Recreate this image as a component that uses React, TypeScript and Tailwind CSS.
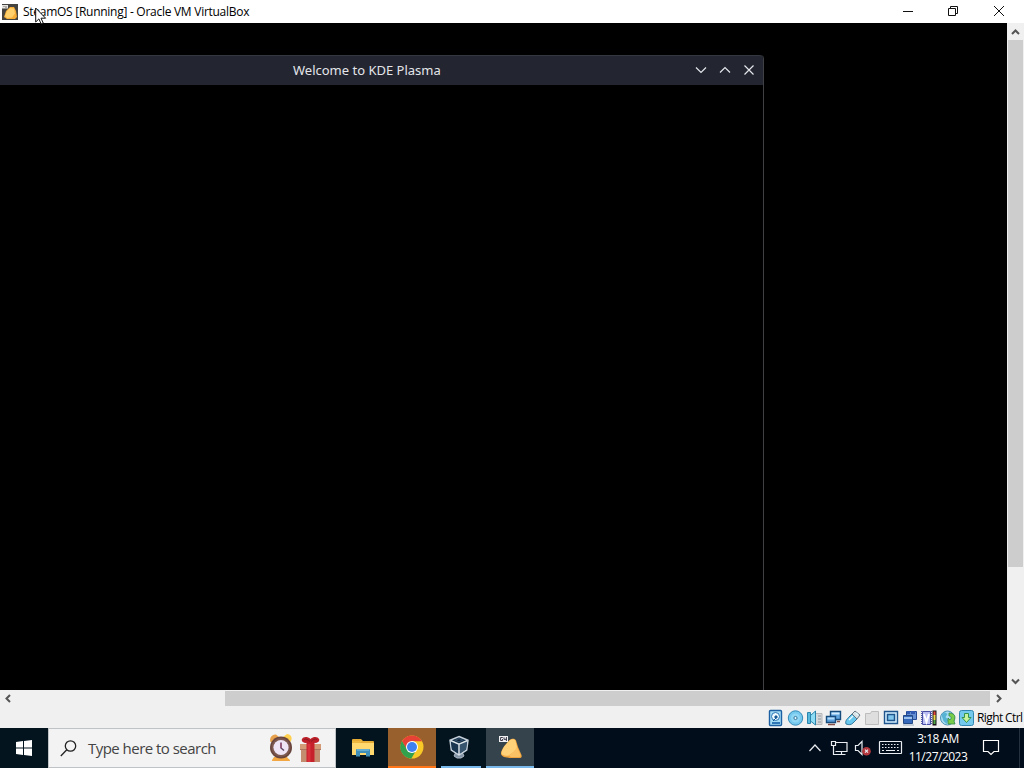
import React from 'react';

type IconProps = { className?: string };

const GuestIcon: React.FC<IconProps> = ({ className }) => (
  <svg className={className} viewBox="0 0 16 16">
    <path d="M0 0h16v16H0z" fill="#45433f" />
    <path d="M2 13 4 7l4-4h4l2 4 1 6-2 2H5z" fill="#f5ad38" />
    <path d="m3 12 2-5 3-3 4 .5 1 5-3 4-5 .5z" fill="#ffd06b" />
    <path d="M0 1h6v3.500H0z" fill="#e8e6e2" />
    <path d="M1.500 2.500h1M4 2v2" stroke="#77716b" fill="none" />
  </svg>
);

const PotatoIcon: React.FC = () => (
  <svg className="h-6 w-6" viewBox="0 0 24 24">
    <path d="M3 18.500c0-2 1-4 3-7l5-6c2-2 6-2.500 7 0l2 6.500 3.500 8c.5 2 0 3-2 3H12c-4-.500-9-1-9-4.500z" fill="#f0a53f" />
    <path d="M3.500 18c0-2 1.500-4 3-7l5-5.500c2-1.500 5-2 6 .5l1.500 6c-1 4-5 6-8 8.500-3 .5-7.500 0-7.500-2.500z" fill="#ffd27a" />
    <path d="m19 12 3.500 8c.3 2-1 2-2.500 2h-7l-2-1.500c3-2.500 7-4.500 8-8.500z" fill="#fbc265" />
    <path d="M1 1h9v6H1z" fill="#f1f1f4" />
    <path d="M4.800 2.500H2.600v3h2V4M6 2.300v2h3M8.400 2v4" stroke="#3b3848" fill="none" />
  </svg>
);

const ClockIcon: React.FC = () => (
  <svg className="h-[30px] w-6" viewBox="0 0 24 30">
    <path d="M5 24c-1 2-2 2-2 4h18c0-2-2-2-3-4z" fill="#f2a743" />
    <path d="M1.500 9C0 5 3 1 7 1.500L10 4 4 9z" fill="#e7a04b" />
    <path d="M22 8c2-4-1-7-4-7l-4 3 6 6z" fill="#ffd04f" />
    <circle cx="12" cy="14.500" r="11" fill="#68443d" />
    <circle cx="12" cy="14.500" r="9.500" fill="#7b574f" />
    <circle cx="12" cy="14.500" r="7.600" fill="#efe3f6" />
    <path d="M12 9.500V15l3 2.500" stroke="#5d4662" strokeWidth="1.5" fill="none" />
    <path d="M12 10v5" stroke="#a84a75" strokeWidth="1" />
  </svg>
);

const GiftIcon: React.FC = () => (
  <svg className="h-[27px] w-[23px]" viewBox="0 0 23 27">
    <path d="M1 7h21v5H1z" fill="#d49b77" />
    <path d="M2 12h19v13H2z" fill="#c38d70" />
    <path d="M1 12h21v1H1z" fill="#ad755d" />
    <path d="M7.500 5h8v20h-8z" fill="#c7212c" />
    <path d="M8.500 7h3v18h-3z" fill="#d9323b" />
    <path d="M11.500 2C8-1 4 0 3 2c-1 2 1 4 4 4l4.500-1L16 6c3 0 5-2 4-4-1-2-5-3-8.500 0z" fill="#bd2029" />
    <path d="M5 2.500c2-1 4 0 6 2M18 2.500c-2-1-4 0-6 2" stroke="#8e1822" fill="none" />
  </svg>
);

const FolderIcon: React.FC = () => (
  <svg className="h-5 w-[23px]" viewBox="0 0 23 20">
    <path d="M0 2q0-1 1-1h8l2 2h10q1 0 1 1v13H0z" fill="#e5ab35" />
    <path d="M0 5h22v12H0z" fill="#ffd96f" />
    <path d="M0 4h8l2-1.500" fill="none" stroke="#f6c64d" />
    <path d="M4 18.500V12q0-1 1-1h12q1 0 1 1v6.500h-4V15H8v3.500z" fill="#3f8fb8" />
    <path d="M5 11h12v2H5z" fill="#65add0" />
  </svg>
);

const ChromeIcon: React.FC = () => (
  <svg className="h-6 w-6" viewBox="0 0 24 24">
    <circle cx="12" cy="12" r="11.5" fill="#f9c927" />
    <path d="M12 12 2 6.300A11.500 11.500 0 0 1 22 6.300H12z" fill="#e64235" />
    <path d="M2 6.300A11.500 11.500 0 0 0 11.400 23.500l5-8.700L12 12 7 15z" fill="#32a14e" />
    <path d="m2 6.300 5 8.500L12 7z" fill="#e64235" />
    <path d="M2 6.300 7 14.800l3 2.500 1 6.200A11.500 11.500 0 0 1 2 6.300z" fill="#32a14e" />
    <circle cx="12" cy="12" r="6" fill="#fff" />
    <circle cx="12" cy="12" r="5" fill="#3f82ef" />
  </svg>
);

const BoxIcon: React.FC = () => (
  <svg className="h-6 w-5" viewBox="0 0 20 24">
    <path d="m7 17-2 4 3 2h4l3-2-2-4z" fill="#8294a5" stroke="#aebac5" />
    <path d="m10 1.500 9 3.800-1.300 9.700-7.700 5-7.700-5L1 5.300z" fill="#122b43" stroke="#c3cfda" strokeWidth="1.500" />
    <path d="m11 10 7-3.500-1 8L11 18.500z" fill="#37556f" />
    <path d="m9 10-7-3.500 1 8 6 4z" fill="#1a3651" />
    <path d="M1.500 5.500 10 9.300l8.500-3.800M10 9.300V20" fill="none" stroke="#dce4eb" strokeWidth="1.500" />
    <path d="m5 5.200 5-2.200 5 2.200-5 2.300z" fill="#33506a" />
    <path d="m7.500 5.200 2.500-1 2.500 1-2.500 1z" fill="#102338" />
  </svg>
);

const StatusIcons: React.FC = () => (
  <svg className="h-[18px] w-[208px]" viewBox="0 0 208 18">
    {/* hard disk */}
    <rect x="1.500" y="1.500" width="12" height="15" rx="1" fill="#a5dcf5" stroke="#1c5fa3" strokeWidth="1.4" />
    <circle cx="7.500" cy="7.500" r="4" fill="#effaff" stroke="#2673b3" />
    <path d="M7 7h2v2H7zM5 12l3-3" fill="#165895" stroke="#165895" />
    <path d="M4 14h8" stroke="#2d77b7" strokeWidth="2" />
    {/* optical disc */}
    <circle cx="27.500" cy="9" r="7.200" fill="#75c9ee" stroke="#338ab9" />
    <circle cx="27.500" cy="9" r="4.500" fill="#8fd7f4" />
    <circle cx="27.500" cy="9" r="1.600" fill="#e8faff" stroke="#36779d" />
    {/* audio */}
    <path d="M47 4.500h7v11h-7z" fill="#d6d8da" stroke="#b4b6b8" />
    <path d="M50 7h3M50 10h3M50 13h3" stroke="#94989c" />
    <path d="M42.500 6.500 47.500 2v14l-5-4z" fill="#8fdcf5" stroke="#2b84ac" />
    <path d="M39.500 3.500h3v11h-3z" fill="#58b9dd" stroke="#2b84ac" />
    {/* network */}
    <path d="M62.500 2.500h10v8h-10z" fill="#61a6df" stroke="#174c7c" strokeWidth="1.4" />
    <path d="M63.500 3.500h8v2h-8z" fill="#d3edff" />
    <path d="M58.500 7.500h9v6h-9z" fill="#5c9fdc" stroke="#174c7c" strokeWidth="1.4" />
    <path d="M59.500 8.500h7v2h-7z" fill="#b4ddfa" />
    <path d="M60 15.500h7M69 12.500h3" stroke="#884f49" strokeWidth="1.4" />
    {/* usb */}
    <path d="M78 15c-1-3 1-5 3-7l3-3 5 5-4 4c-2 2-4 2-7 1z" fill="#67c6ec" stroke="#34799d" />
    <path d="m84 5 3-3 5 4-3 4z" fill="#d9e2e6" stroke="#657782" />
    <path d="m88 4 2 2M81 11l4-4" stroke="#e9fbff" strokeWidth="1.4" />
    {/* shared folder */}
    <path d="M97.500 4.500h5l1-2h7v13h-13z" fill="#dededf" stroke="#bdbdbe" />
    {/* display */}
    <path d="M116.500 2.500h13v12h-13z" fill="#d6efff" stroke="#1f558c" strokeWidth="1.4" />
    <path d="M119.500 5.500h7v6h-7z" fill="#80c6ed" stroke="#1e548c" strokeWidth="1.500" />
    {/* recording */}
    <path d="M138.500 2.500h10v8h-10z" fill="#648fd3" stroke="#244a96" />
    <path d="M135.500 6.500h9v8h-9z" fill="#3769ba" stroke="#244a86" />
    <path d="M139 2h3v3h-3zM143 2h4v3h-4z" fill="#315bb0" />
    <path d="M136 8h8v2h-8z" fill="#9dc2ed" />
    <path d="M135 16h11" stroke="#9baabc" />
    {/* cpu */}
    <path d="M154.500 2.500h8v13h-8z" fill="#b9bdf2" stroke="#4950a3" />
    <path d="m156 5 2.500 8L161 5" stroke="#fff" strokeWidth="2" fill="none" />
    <path d="M153.500 2v14M163.500 2v14" stroke="#5059aa" strokeDasharray="1 1" />
    <path d="M164.500 1.500h4v15h-4z" fill="#171717" />
    <path d="M165.500 2.500h2v4h-2z" fill="#e6463b" />
    <path d="M165.500 6h2v5h-2z" fill="#f1dc46" />
    <path d="M165.500 11h2v4h-2z" fill="#50a848" />
    {/* mouse integration */}
    <circle cx="179.500" cy="9" r="7" fill="#a8ddf4" stroke="#4b91b4" />
    <path d="m173.500 6 3-3 3 2-2 3 3 3-2 4-3-3z" fill="#57b3d4" />
    <path d="M181 4c6 0 7 4 5 8l1 3h-7v-6l2 2c2-2 1-4-1-4z" fill="#78ce4a" stroke="#338547" strokeWidth=".8" />
    {/* keyboard capture */}
    <rect x="191.500" y="1.500" width="14" height="15" rx="2" fill="#72c9ed" stroke="#3285b0" />
    <path d="M196.500 4.500h4v4h2.500l-4.500 5-4.500-5h2.500z" fill="#c8f29b" stroke="#35944a" />
  </svg>
);

const App: React.FC = () => {
  return (
    <div className="relative flex h-[768px] w-[1024px] flex-col overflow-hidden bg-[#f0f0f0] font-['Open_Sans',sans-serif] text-black">
      <header className="flex h-[23px] shrink-0 items-center bg-white">
        <GuestIcon className="ml-0.5 h-4 w-4" />
        <span className="ml-[5px] w-60 whitespace-nowrap text-[12px] leading-[23px] tracking-[-0.27px]">
          SteamOS [Running] - Oracle VM VirtualBox
        </span>
        <svg className="ml-auto h-[22px] w-[126px]" viewBox="0 0 126 22" fill="none" stroke="#111">
          <path d="M5 10.500h10" />
          <path d="M50.500 7.500h7v7h-7zM52.500 7.500v-2h7v7h-2" />
          <path d="m96 5 10 10m0-10L96 15" />
        </svg>
      </header>

      <div className="flex h-[667px] shrink-0">
        <main className="w-[1007px] bg-black pt-8">
          <section className="h-[635px] w-[764px] rounded-tr border-r border-[#3e4044] bg-black">
            <div className="flex h-[30px] items-start rounded-tr border-t border-[#34373f] bg-[#232630]">
              <h1 className="ml-[293px] w-[401px] whitespace-nowrap font-['Noto_Sans',sans-serif] text-[13px] leading-7 text-[#e3e5eb]">
                Welcome to KDE Plasma
              </h1>
              <svg className="mt-1 h-5 w-[66px]" viewBox="0 0 66 20" fill="none" stroke="#e4e6eb" strokeWidth="1.2">
                <path d="m2 7.500 5 5 5-5" />
                <path d="m26 12.500 5-5 5 5" />
                <path d="m50.500 5.500 9 9m0-9-9 9" />
              </svg>
            </div>
          </section>
        </main>
        <aside className="flex w-[17px] flex-col bg-[#f0f0f0] pl-px">
          <svg className="h-[17px] w-4" viewBox="0 0 16 17" fill="none" stroke="#555" strokeWidth="2">
            <path d="m4 11 3.500-3.500L11 11" />
          </svg>
          <div className="h-[527px] w-[15px] bg-[#cdcdcd]" />
          <svg className="mt-auto h-[17px] w-4" viewBox="0 0 16 17" fill="none" stroke="#555" strokeWidth="2">
            <path d="M4 6.500 7.500 10 11 6.500" />
          </svg>
        </aside>
      </div>

      <div className="flex h-[17px] shrink-0 items-center">
        <svg className="h-[17px] w-[225px]" viewBox="0 0 225 17" fill="none" stroke="#555" strokeWidth="2">
          <path d="M10 5 6.500 8.500 10 12" />
        </svg>
        <div className="h-[15px] w-[765px] bg-[#cdcdcd]" />
        <svg className="h-[17px] w-[17px]" viewBox="0 0 17 17" fill="none" stroke="#555" strokeWidth="2">
          <path d="M7 5 10.500 8.500 7 12" />
        </svg>
      </div>

      <div className="flex h-[21px] shrink-0 items-center pl-[768px]">
        <StatusIcons />
        <span className="ml-px whitespace-nowrap text-[12px] leading-5 tracking-[-0.6px]">Right Ctrl</span>
      </div>

      <footer className="flex h-10 shrink-0 bg-[#03141f] text-white">
        <div className="flex w-12 items-center justify-center">
          <svg className="h-4 w-4" viewBox="0 0 16 16" fill="#fff">
            <path d="m0 2 7-1v6.500H0zM8 .9 16 0v7.500H8zM0 8.500h7V15l-7-1zM8 8.500h8V16l-8-1z" />
          </svg>
        </div>
        <div className="flex w-72 items-center border border-[#bfc3c6] bg-[#f3f3f3] text-[#444]">
          <svg className="ml-[11px] h-[17px] w-[17px]" viewBox="0 0 17 17" fill="none" stroke="#222" strokeWidth="1.3">
            <circle cx="10.500" cy="6" r="5.200" />
            <path d="m6.800 9.700-6 6.300" />
          </svg>
          <span className="ml-[11px] w-[181px] whitespace-nowrap text-[15px] tracking-[-0.53px]">Type here to search</span>
          <ClockIcon />
          <div className="ml-[6px] mt-1"><GiftIcon /></div>
        </div>
        <div className="ml-1 flex w-12 items-center justify-center pr-0.5"><FolderIcon /></div>
        <div className="flex w-12 items-center justify-center border-b-2 border-[#ff7518] bg-[#97602d]"><ChromeIcon /></div>
        <div className="ml-[5px] flex w-10 items-center justify-center border-b-2 border-[#79b8eb] pr-1"><BoxIcon /></div>
        <div className="ml-[5px] flex w-12 items-center justify-center border-b-2 border-[#79b8eb] bg-[#35434c]"><PotatoIcon /></div>
        <div className="flex flex-1 items-center bg-[#020d1b]">
          <svg className="ml-[274px] h-6 w-24" viewBox="0 0 96 24" fill="none" stroke="#e9edf1" strokeWidth="1.2">
            <path d="m1.500 15 5.500-6 5.500 6" />
            <path d="M27.500 6.500h11.500v9H27.500M33.500 15.500v3m-4 0h8M23.500 5.500h4v4h-4zM25.500 9.500v9h4" />
            <path d="M47.500 9.500h2.500l4-4v13l-4-4h-2.500z" />
            <circle cx="58.500" cy="15.200" r="4.300" fill="#b4373d" stroke="none" />
            <path d="m57 13.700 3 3m0-3-3 3" />
            <rect x="71.500" y="5.500" width="22" height="12" rx=".5" />
            <path d="M74 8.500h17M74 11.500h17" strokeDasharray="1.500 1.500" />
            <path d="M74 14.500h2m2 0h9m2 0h2" />
          </svg>
          <div className="ml-[3px] flex w-[62px] flex-col text-center text-[12px] leading-[18px] tracking-[-0.5px]">
            <span className="whitespace-nowrap">3:18 AM</span>
            <span className="whitespace-nowrap">11/27/2023</span>
          </div>
          <svg className="ml-[13px] h-[18px] w-[18px]" viewBox="0 0 18 18" fill="none" stroke="#fff" strokeWidth="1.2">
            <path d="M1.500 1.500h15v11H12l-3 3-3-3H1.500z" />
          </svg>
          <div className="ml-auto mr-1 h-10 w-px bg-[#26313d]" />
        </div>
      </footer>

      <svg className="absolute left-[35px] top-[7px] h-[18px] w-3" viewBox="0 0 12 18">
        <path d="M.7 1v14l3.200-3.100 2.200 5 2.100-1-2.200-4.700h4.600z" fill="#fff" stroke="#111" />
      </svg>
    </div>
  );
};

export default App;
